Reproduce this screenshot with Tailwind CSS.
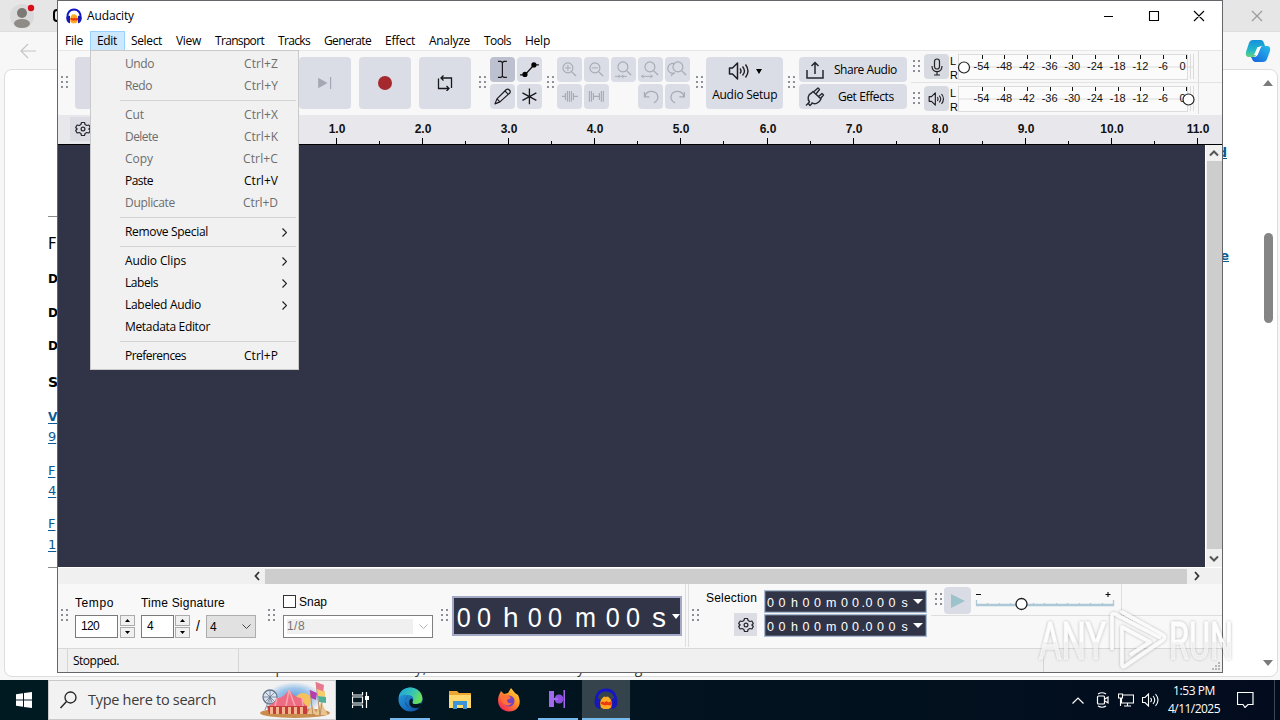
<!DOCTYPE html>
<html lang="en">
<head>
<meta charset="utf-8">
<title>Audacity</title>
<script src="https://cdn.jsdelivr.net/npm/@tailwindcss/browser@4"></script>
</head>
<body class="relative h-[720px] w-[1280px] overflow-hidden bg-[#f7f7f7] font-['Open_Sans','Noto_Sans',sans-serif] text-[12px] text-black">

<svg class="hidden">
  <defs>
    <symbol id="grip" viewBox="0 0 8 13"><g fill="#8d8d98"><rect x="0" y="0" width="2" height="2"/><rect x="5" y="0" width="2" height="2"/><rect x="0" y="5" width="2" height="2"/><rect x="5" y="5" width="2" height="2"/><rect x="0" y="10" width="2" height="2"/><rect x="5" y="10" width="2" height="2"/></g></symbol>
    <symbol id="gear" viewBox="0 0 16 16"><path d="M6.500 1.500h3l.6 2 1.700 1 2.100-.5 1.400 2.500L13.900 8l1.400 1.500-1.400 2.500-2.100-.5-1.700 1-.6 2h-3l-.6-2-1.700-1-2.100.5L.7 9.500 2.100 8 .7 6.500 2.100 4l2.100.5 1.700-1z" fill="none" stroke="#26262c" stroke-width="1.200" stroke-linejoin="round"/><circle cx="8" cy="8" r="1.900" fill="none" stroke="#26262c" stroke-width="1.200"/></symbol>
    <symbol id="phones" viewBox="0 0 24 22"><path d="M2.500 15C1 7 5.500 2 12 2s11 5 9.500 13" fill="none" stroke="#1414c8" stroke-width="2.800"/><path d="M1.500 11C-.5 14 .5 19 4 20.500l2 .5V10.500zM22.500 11c2 3 1 8-2.500 9.500l-2 .5V10.500z" fill="#1818b8"/><path d="M6 15l1.500-4L10 8.500l2 .5 2-.5 2.500 2.500L18 15l-1 4.500-2.500 1.500h-5L7 19.500z" fill="#ffab22"/><path d="M6 15l2.500-1.500 2 1 2-1.500 2 1.500 2-1L18.500 15l-2 2.500-3-.5-2.500.5-3-1z" fill="#ee3a10"/></symbol>
    <symbol id="speaker" viewBox="0 0 22 20"><path d="M1.500 7v6h3l5 5V2l-5 5z" fill="none" stroke="#1e1e24" stroke-width="1.500" stroke-linejoin="round"/><path d="M12 7.500q2 2.500 0 5M14.500 5.500q4 4.500 0 9M17.500 3.500q5 6.500 0 13" fill="none" stroke="#1e1e24" stroke-width="1.400"/></symbol>
    <symbol id="lens" viewBox="0 0 25 25"><circle cx="11" cy="11" r="5" fill="none" stroke="#a8aab5" stroke-width="1.200"/><path d="M14.700 14.700l4.500 4.500" stroke="#a8aab5" stroke-width="1.300"/></symbol>
  </defs>
</svg>

<!-- Browser window behind -->
<div class="absolute inset-x-0 top-0 flex h-[680px] flex-col bg-[#f7f7f7]">
  <div class="flex h-8 items-center justify-between border-b border-[#dedede] bg-[#e6e6e6] pl-2.5 pr-[17px]">
    <svg class="h-7 w-12" viewBox="0 0 48 28"><circle cx="12" cy="14" r="12" fill="#dadada"/><circle cx="12" cy="11" r="5" fill="#7d7975"/><ellipse cx="12" cy="21.500" rx="8" ry="4.500" fill="#8f8b87"/><circle cx="21" cy="6" r="3.200" fill="#d90d1c"/></svg>
    <svg class="size-3" viewBox="0 0 12 12"><path d="M1 1l10 10M11 1L1 11" stroke="#9a9a9a" stroke-width="1.200"/></svg>
  </div>
  <div class="flex h-[37px] items-center justify-between pl-5 pr-[9px]">
    <svg class="h-4 w-4" viewBox="0 0 16 16"><path d="M8 1L1 8l7 7M1 8h15" fill="none" stroke="#c4c4c4" stroke-width="1.200"/></svg>
    <svg class="size-[26px]" viewBox="0 0 26 26"><defs><linearGradient id="cpa" x1="0" y1="0" x2="0" y2="1"><stop offset="0" stop-color="#1590dd"/><stop offset=".6" stop-color="#22b8c8"/><stop offset="1" stop-color="#67d07c"/></linearGradient><linearGradient id="cpb" x1="1" y1="0" x2="0" y2="1"><stop offset="0" stop-color="#27bdec"/><stop offset="1" stop-color="#1660dc"/></linearGradient></defs><path d="M8 2h8q2 0 3 3l1 3h-4q-2 0-3 3l-2 6q-1 2-3 2H4q-4 0-3-5l3-9q1-3 4-3z" fill="url(#cpa)"/><path d="M18 24h-8q-2 0-3-3l-1-2h4q2 0 3-3l2-6q1-2 3-2h4q4 0 3 5l-3 8q-1 3-4 3z" fill="url(#cpb)"/><path d="M12.500 9h3.500l-3.500 8H9z" fill="#fff"/></svg>
  </div>
  <div class="ml-1 mr-0.5 flex h-[608px] justify-between rounded-lg border border-[#dddddd] bg-white">
    <div class="flex h-[606px] w-[70px] flex-col pl-[43px] font-['DejaVu_Sans','Verdana',sans-serif] text-[12px]">
      <div class="mt-[146px] h-px w-5 shrink-0 bg-[#8a8a8a]"></div>
      <div class="mt-[15px] h-6 text-[15px] leading-6">F</div>
      <div class="mt-[13px] h-5 font-bold leading-5">D</div>
      <div class="mt-3.5 h-5 font-bold leading-5">D</div>
      <div class="mt-[13px] h-5 font-bold leading-5">D</div>
      <div class="mt-3.5 h-6 text-[14px] font-bold leading-6">S</div>
      <div class="mt-[13px] h-5 w-4 border-[#0b5a94] font-bold leading-5 text-[#0b5a94] underline underline-offset-2">V</div>
      <div class="h-5 text-[13px] leading-5 text-[#0b5a94] underline underline-offset-2">9</div>
      <div class="mt-3.5 h-5 text-[13px] leading-5 text-[#0b5a94] underline underline-offset-2">F</div>
      <div class="h-5 text-[13px] leading-5 text-[#0b5a94] underline underline-offset-2">4</div>
      <div class="mt-[13px] h-5 text-[13px] leading-5 text-[#0b5a94] underline underline-offset-2">F</div>
      <div class="mt-px h-5 text-[13px] leading-5 text-[#0b5a94] underline underline-offset-2">1</div>
      <div class="mt-3 h-px w-5 shrink-0 bg-[#8a8a8a]"></div>
    </div>
    <div class="flex w-[60px] justify-between">
      <div class="flex w-4 flex-col items-end pr-1.5 pt-[73px] font-['DejaVu_Sans',sans-serif] text-[13px] font-bold leading-5 text-[#0b5a94]">
        <span class="underline">d</span><span class="mt-[83px] -mr-0.5 underline">e</span>
      </div>
      <div class="mr-[3px] flex w-3 flex-col items-center pt-2">
        <svg class="h-2.5 w-2.5" viewBox="0 0 10 10"><path d="M0 8l5-6 5 6z" fill="#7b7b7b"/></svg>
        <div class="mt-[145px] h-[90px] w-[9px] rounded-full bg-[#858585]"></div>
        <svg class="mt-[335px] h-2.5 w-2.5" viewBox="0 0 10 10"><path d="M0 2l5 6 5-6z" fill="#7b7b7b"/></svg>
      </div>
    </div>
  </div>
</div>
<div class="absolute left-[220px] top-[662px] h-[15px] w-[470px] text-[14px] leading-[12px] text-[#333]"><span data-w="454">driver updater automatically, hitbad and install any missing and</span></div>
<div class="absolute left-[53px] top-[9px] h-[13px] w-3 rounded-sm border-2 border-black"></div>

<!-- Audacity window -->
<div class="absolute left-[57px] top-0 flex h-[673px] w-[1166px] flex-col border border-[#66666a] bg-white">
  <div class="flex h-[30px] items-center pl-2 pr-4">
    <svg class="h-4 w-4" viewBox="0 0 24 22" preserveAspectRatio="none"><use href="#phones" width="24" height="22"/></svg>
    <span class="ml-[5px]" data-w="47">Audacity</span>
    <svg class="ml-auto h-3 w-[102px]" viewBox="0 0 102 12"><path d="M-1 6.500h10M45.500 1.500h9v9h-9zM90 1l10 10M100 1L90 11" fill="none" stroke="#000" stroke-width="1.100"/></svg>
  </div>
  <div class="flex h-[19px] leading-[19px]">
    <div class="w-8 pl-[7px]"><span data-w="18">File</span></div>
    <div class="-mr-px w-[35px] border border-b-0 border-[#99d1ff] bg-[#cce8ff] pl-1.5 leading-[17px]"><span data-w="20">Edit</span></div>
    <div class="w-[45px] pl-[7px]"><span data-w="31">Select</span></div>
    <div class="w-[39px] pl-[7px]"><span data-w="25">View</span></div>
    <div class="w-[63px] pl-[7px]"><span data-w="49">Transport</span></div>
    <div class="w-[46px] pl-[7px]"><span data-w="32">Tracks</span></div>
    <div class="w-[61px] pl-[7px]"><span data-w="47">Generate</span></div>
    <div class="w-11 pl-[7px]"><span data-w="30">Effect</span></div>
    <div class="w-[55px] pl-[7px]"><span data-w="41">Analyze</span></div>
    <div class="w-[41px] pl-[7px]"><span data-w="27">Tools</span></div>
    <div class="w-10 pl-[7px]"><span data-w="25">Help</span></div>
  </div>

  <!-- Upper toolbars -->
  <div class="flex h-[65px] border-t border-[#e6e6e6] bg-[#f8f8f8] pl-[3px] pt-1.5">
    <svg class="mt-[19px] h-[13px] w-2"><use href="#grip"/></svg>
    <div class="ml-1.5 flex gap-2">
      <div class="h-[52px] w-[216px] rounded-sm bg-[#dadbe4]"></div>
      <div class="grid h-[52px] w-[52px] place-items-center rounded-sm bg-[#dbdde6]"><svg class="h-3 w-4" viewBox="0 0 16 14"><path d="M0 1l11 6L0 13z" fill="#a5a8b3"/><path d="M14.500 0v14" stroke="#a5a8b3" stroke-width="1.400"/></svg></div>
      <div class="grid h-[52px] w-[52px] place-items-center rounded-sm bg-[#dbdde6]"><div class="size-3.5 rounded-full bg-[#a5292d]"></div></div>
      <div class="grid h-[52px] w-[52px] place-items-center rounded-sm bg-[#dbdde6]"><svg class="size-4" viewBox="0 0 16 16"><path d="M4 3h10.500v10M12 13.500H1.500V3.500M6.500.5L4 3l2.500 2.500M9.500 11l2.500 2.500L9.500 16" fill="none" stroke="#17171c" stroke-width="1.300"/></svg></div>
    </div>
    <svg class="ml-2 mt-[19px] h-[13px] w-2"><use href="#grip"/></svg>
    <div class="ml-[3px] grid h-[52px] w-[52px] grid-cols-2 gap-0.5">
      <div class="rounded-sm bg-[#bdc0ce]"><svg viewBox="0 0 25 25"><path d="M8 4.500h3l1.500 1 1.500-1h3M12.500 5.500v14M8 20.500h3l1.500-1 1.500 1h3" fill="none" stroke="#18181d" stroke-width="1.200"/></svg></div>
      <div class="rounded-sm bg-[#dbdde6]"><svg viewBox="0 0 25 25"><path d="M3 18h5l9-10h5" fill="none" stroke="#111" stroke-width="1.300"/><circle cx="8" cy="17.500" r="2.600"/><circle cx="17" cy="8" r="2.600"/></svg></div>
      <div class="rounded-sm bg-[#dbdde6]"><svg viewBox="0 0 25 25"><path d="M5 20l2-5L16.500 5.500q1.500-1 3 .5t.5 3L10 18zM7 15l3 3M15 7l3 3" fill="none" stroke="#18181d" stroke-width="1.200" stroke-linejoin="round"/></svg></div>
      <div class="rounded-sm bg-[#dbdde6]"><svg viewBox="0 0 25 25"><path d="M12.500 4.500v16M5.500 9l14 7.500M19.500 9l-14 7.500" fill="none" stroke="#18181d" stroke-width="1.300"/></svg></div>
    </div>
    <svg class="ml-[5px] mt-[19px] h-[13px] w-2"><use href="#grip"/></svg>
    <div class="ml-[3px] grid h-[52px] w-[133px] grid-cols-5 gap-0.5">
      <div class="rounded-sm bg-[#dbdde6]"><svg viewBox="0 0 25 25"><use href="#lens"/><path d="M8 11h6M11 8v6" stroke="#a8aab5"/></svg></div>
      <div class="rounded-sm bg-[#dbdde6]"><svg viewBox="0 0 25 25"><use href="#lens"/><path d="M8 11h6" stroke="#a8aab5"/></svg></div>
      <div class="rounded-sm bg-[#dbdde6]"><svg viewBox="0 0 25 25"><use href="#lens" x="1" y="-1"/><path d="M4 19.500h5M7.500 18l2 1.500-2 1.500M11 19.500h5M12.500 18l-2 1.500 2 1.500" fill="none" stroke="#a8aab5"/></svg></div>
      <div class="rounded-sm bg-[#dbdde6]"><svg viewBox="0 0 25 25"><use href="#lens" x="1" y="-1"/><path d="M3.500 19.500h11M5.500 18l-2 1.500 2 1.500M12.500 18l2 1.500-2 1.500" fill="none" stroke="#a8aab5"/></svg></div>
      <div class="rounded-sm bg-[#dbdde6]"><svg viewBox="0 0 25 25"><use href="#lens" x="2" y="-1"/><path d="M10 16a5 5 0 1 1 0-9M9 16l-3 3" fill="none" stroke="#a8aab5" stroke-width="1.200"/></svg></div>
      <div class="rounded-sm bg-[#dbdde6]"><svg viewBox="0 0 25 25"><path d="M5 12.500h3M17 12.500h4M8.500 9v7M10.500 7v11M12.500 7v11M14.500 7v11M16.500 9v7" stroke="#a8aab5" stroke-width="1.200"/></svg></div>
      <div class="rounded-sm bg-[#dbdde6]"><svg viewBox="0 0 25 25"><path d="M9 12.500h7M5.500 7v11M7.500 7v11M9.500 9v7M15.500 9v7M17.500 7v11M19.500 7v11" stroke="#a8aab5" stroke-width="1.200"/></svg></div>
      <div></div>
      <div class="rounded-sm bg-[#dbdde6]"><svg viewBox="0 0 25 25"><path d="M7 12.500C9 5.500 19 6 20 13q.2 4-4 6M6.500 8v5h5" fill="none" stroke="#a8aab5" stroke-width="1.300"/></svg></div>
      <div class="rounded-sm bg-[#dbdde6]"><svg viewBox="0 0 25 25"><path d="M19 12.500C17 5.500 7 6 6 13q-.2 4 4 6M19.500 8v5h-5" fill="none" stroke="#a8aab5" stroke-width="1.300"/></svg></div>
    </div>
    <svg class="ml-1.5 mt-[19px] h-[13px] w-2"><use href="#grip"/></svg>
    <div class="ml-[3px] flex h-[52px] w-[77px] flex-col items-center rounded-sm bg-[#dbdde6] pt-1">
      <div class="flex items-center gap-1.5"><svg class="h-5 w-[22px]"><use href="#speaker"/></svg><svg class="h-[5px] w-1.5" viewBox="0 0 6 5"><path d="M0 0h6L3 5z"/></svg></div>
      <span class="mt-[5px] leading-[18px]" data-w="65">Audio Setup</span>
    </div>
    <svg class="ml-[5px] mt-[19px] h-[13px] w-2"><use href="#grip"/></svg>
    <div class="ml-[3px] flex w-[109px] flex-col gap-0.5">
      <div class="flex h-[25px] items-center rounded-sm bg-[#dbdde6] pl-[7px]">
        <svg class="h-[18px] w-[18px]" viewBox="0 0 18 18"><path d="M1 9v8h16V9M9 13V1.500M5.500 5L9 1.500 12.500 5" fill="none" stroke="#26262e" stroke-width="1.500"/></svg>
        <span class="ml-[10px]" data-w="63">Share Audio</span>
      </div>
      <div class="flex h-[25px] items-center rounded-sm bg-[#dbdde6] pl-1.5">
        <svg class="h-5 w-5" viewBox="0 0 20 20"><path d="M1 18.500l3.500-3.500C2 12 3 7.500 6.500 6L8 4.500l8 7.500c-2 4.500-6.500 6-9.500 3.500M3 16l2 2.500 2-2M8.500 5L13 1l1.500 1.500L11 7M13 10l4-3.500L18.500 8 15.500 11.500" fill="none" stroke="#26262e" stroke-width="1.400" stroke-linejoin="round"/></svg>
        <span class="ml-[13px]" data-w="56">Get Effects</span>
      </div>
    </div>
    <div class="-mt-1.5 ml-1 flex w-[313px] flex-col text-[11px]">
      <div class="flex h-8 border-b border-[#e2e2e2]">
        <svg class="ml-0.5 mt-[9px] h-[13px] w-2"><use href="#grip"/></svg>
        <div class="ml-[3px] mt-[3px] grid h-[25px] w-[25px] place-items-center rounded-sm bg-[#d8dae2]"><svg class="h-[18px] w-3" viewBox="0 0 12 18"><rect x="3.500" y="1" width="5" height="10" rx="2.500" fill="none" stroke="#222" stroke-width="1.200"/><path d="M1 8c0 7.500 10 7.500 10 0M6 14v3M3 17h6" fill="none" stroke="#222" stroke-width="1.200"/></svg></div>
        <svg class="h-[31px] w-[250px] font-['Liberation_Sans',sans-serif]" viewBox="950 0 250 31"><g id="meter1"></g><circle cx="965" cy="16.500" r="5.500" fill="#fff" stroke="#222" stroke-width="1.200"/></svg>
      </div>
      <div class="flex h-8">
        <svg class="ml-0.5 mt-[9px] h-[13px] w-2"><use href="#grip"/></svg>
        <div class="ml-[3px] mt-[3px] grid h-[25px] w-[25px] place-items-center rounded-sm bg-[#d8dae2]"><svg class="h-4 w-[17px]" viewBox="0 0 22 20"><use href="#speaker" width="22" height="20"/></svg></div>
        <svg class="h-[31px] w-[250px] font-['Liberation_Sans',sans-serif]" viewBox="950 0 250 31"><g id="meter2"></g><circle cx="1189.500" cy="16.500" r="5.500" fill="#fff" stroke="#222" stroke-width="1.200"/></svg>
      </div>
    </div>
  </div>

  <!-- Timeline -->
  <div class="flex h-[30px] border-b border-black bg-[#e8e8ec] pl-3">
    <div class="mt-0.5 h-6 w-5 bg-[#dbdce4] pl-[5px] pt-1"><svg class="size-4"><use href="#gear"/></svg></div>
    <svg class="h-[29px] w-[1132px] font-['Liberation_Sans',sans-serif]" viewBox="90 0 1132 29"><g id="ruler"></g></svg>
  </div>

  <!-- Track area -->
  <div class="flex h-[422px]">
    <div class="w-[1147px] bg-[#313447]"></div>
    <div class="flex w-[17px] flex-col items-center border-l border-white bg-[#f0f0f0]">
      <svg class="h-4 w-4" viewBox="0 0 16 16"><path d="M4 10.500l4-4 4 4" fill="none" stroke="#555" stroke-width="2"/></svg>
      <div class="h-[388px] w-[15px] bg-[#cdcdcd]"></div>
      <svg class="mt-[2px] h-4 w-4" viewBox="0 0 16 16"><path d="M4 5.500l4 4 4-4" fill="none" stroke="#555" stroke-width="2"/></svg>
    </div>
  </div>
  <div class="flex h-[17px] items-center border-t border-white bg-[#f0f0f0] pl-[191px]">
    <svg class="h-4 w-4" viewBox="0 0 16 16"><path d="M10 4L6.500 8l3.500 4" fill="none" stroke="#333" stroke-width="1.800"/></svg>
    <div class="h-[15px] w-[922px] bg-[#cdcdcd]"></div>
    <svg class="ml-0.5 h-4 w-4" viewBox="0 0 16 16"><path d="M6 4l3.500 4L6 12" fill="none" stroke="#333" stroke-width="1.800"/></svg>
  </div>

  <!-- Lower toolbars -->
  <div class="flex h-[65px] border-b border-[#d8d8d8] bg-[#f8f8f8] pl-[3px] font-['Liberation_Sans',sans-serif]">
    <svg class="mt-[25px] h-[13px] w-2"><use href="#grip"/></svg>
    <div class="ml-1.5 w-[66px] pt-[11px]">
      <div class="h-5 leading-4"><span data-w="39">Tempo</span></div>
      <div class="flex h-[23px] gap-0.5">
        <div class="w-[43px] border border-[#7a7a7a] bg-white pl-[5px] leading-[21px]"><span data-w="18">120</span></div>
        <div class="flex w-[15px] flex-col gap-px">
          <div class="grid h-[11px] place-items-center border border-[#ababab] bg-[#f0f0f0]"><svg class="h-[3px] w-[5px]" viewBox="0 0 5 3"><path d="M0 3L2.500 0 5 3z"/></svg></div>
          <div class="grid h-[11px] place-items-center border border-[#ababab] bg-[#f0f0f0]"><svg class="h-[3px] w-[5px]" viewBox="0 0 5 3"><path d="M0 0l2.500 3L5 0z"/></svg></div>
        </div>
      </div>
    </div>
    <div class="w-[115px] pt-[11px]">
      <div class="h-5 leading-4"><span data-w="84">Time Signature</span></div>
      <div class="flex h-[23px]">
        <div class="w-[33px] border border-[#7a7a7a] bg-white pl-[5px] leading-[21px]">4</div>
        <div class="ml-px flex w-[15px] flex-col gap-px">
          <div class="grid h-[11px] place-items-center border border-[#ababab] bg-[#f0f0f0]"><svg class="h-[3px] w-[5px]" viewBox="0 0 5 3"><path d="M0 3L2.500 0 5 3z"/></svg></div>
          <div class="grid h-[11px] place-items-center border border-[#ababab] bg-[#f0f0f0]"><svg class="h-[3px] w-[5px]" viewBox="0 0 5 3"><path d="M0 0l2.500 3L5 0z"/></svg></div>
        </div>
        <div class="w-4 text-center text-[14px] leading-[22px]">/</div>
        <div class="flex w-[50px] items-center justify-between border border-[#adadad] bg-[#e1e1e1] pl-[3px] pr-1">4<svg class="h-[5px] w-[9px]" viewBox="0 0 9 5"><path d="M.5.5l4 4 4-4" fill="none" stroke="#444"/></svg></div>
      </div>
    </div>
    <svg class="ml-3 mt-[25px] h-[13px] w-2"><use href="#grip"/></svg>
    <div class="ml-[7px] w-[150px] pt-[11px]">
      <div class="flex h-5 gap-[3px] leading-[14px]"><div class="size-[13px] border border-[#333] bg-white"></div><span data-w="28">Snap</span></div>
      <div class="flex h-[23px] items-center justify-between border border-[#7f7f7f] bg-white pl-[3px] pr-1"><div class="h-[15px] w-[126px] bg-[#f0f0f0] leading-[15px] text-[#747474]"><span data-w="18">1/8</span></div><svg class="h-[5px] w-[9px]" viewBox="0 0 9 5"><path d="M.5.5l4 4 4-4" fill="none" stroke="#b4b4b4"/></svg></div>
    </div>
    <svg class="ml-2 mt-[25px] h-[13px] w-2"><use href="#grip"/></svg>
    <svg class="ml-[3px] mt-3 h-10 w-[230px]" viewBox="452 596 230 40"><rect x="453" y="597" width="228" height="38" fill="#313447" stroke="#a4a9c6" stroke-width="2"/><g fill="#fff" font-size="28"><g transform="scale(.9 1)"><text x="507.500 530" y="627">00</text><text x="586.500 609" y="627">00</text><text x="673 695.500" y="627">00</text></g><text x="503" y="627">h</text><text x="575" y="627" textLength="21" lengthAdjust="spacingAndGlyphs">m</text><text x="652" y="627">s</text></g><path d="M672 614h8l-4 5z" fill="#fff"/></svg>
    <div class="ml-[3px] h-[63px] w-1 border-x border-[#dedede]"></div>
    <svg class="ml-[3px] mt-[25px] h-[13px] w-2"><use href="#grip"/></svg>
    <div class="ml-1.5 flex w-[58px] flex-col pt-1.5">
      <span class="leading-4" data-w="51">Selection</span>
      <div class="ml-7 mt-[7px] grid size-[23px] place-items-center bg-[#dbdce4]"><svg class="h-4 w-4"><use href="#gear"/></svg></div>
    </div>
    <div class="flex w-[163px] flex-col gap-px pt-1.5">
      <svg class="h-[23px] w-[163px]" viewBox="764 590 163 23"><g id="time1"></g></svg>
      <svg class="h-[23px] w-[163px]" viewBox="764 590 163 23"><g id="time2"></g></svg>
    </div>
    <div class="ml-1 flex w-[190px] flex-col">
      <div class="flex h-8 border-b border-[#dedede]">
        <svg class="ml-1 mt-[9px] h-[13px] w-2"><use href="#grip"/></svg>
        <div class="ml-px mt-[3px] grid size-[27px] place-items-center rounded-sm bg-[#d9dce4]"><svg class="h-[14px] w-[14px]" viewBox="0 0 14 14"><path d="M0 0l14 7-14 7z" fill="#9cc3cb"/></svg></div>
        <svg class="h-8 w-[150px]" viewBox="971 584 150 32"><path d="M976.500 600v5.500h137V600M976 604.500h138M987.500 603v2M999.500 603v2M1010.500 603v2M1033.500 603v2M1044.500 603v2M1056.500 603v2M1067.500 603v2M1079.500 603v2M1090.500 603v2M1102.500 603v2" fill="none" stroke="#adc9d7" stroke-width="1.300"/><circle cx="1021.500" cy="604" r="5.500" fill="#fff" stroke="#1c1c1c" stroke-width="1.300"/><path d="M976 594.500h5M1105.500 594.500h5M1108 592v5" stroke="#111" stroke-width="1.100"/></svg>
      </div>
    </div>
    <div class="flex grow flex-col"><div class="h-8 border-b border-l border-[#dedede]"></div></div>
  </div>
  <div class="flex h-[22px] grow bg-[#f0f0f0] pl-[9px] leading-[24px]">
    <div class="w-[171px] border-l border-[#d5d5d5] pl-[5px]"><span data-w="46">Stopped.</span></div>
    <div class="w-[805px] border-l border-[#d5d5d5]"></div>
    <div class="flex grow items-end justify-end border-l border-[#d5d5d5] p-0.5"><svg class="size-2" viewBox="0 0 8 8"><path d="M6 0h2v2H6zM6 3h2v2H6zM3 3h2v2H3zM0 6h2v2H0zM3 6h2v2H3zM6 6h2v2H6z" fill="#b7b7b7"/></svg></div>
  </div>
</div>

<!-- Edit menu -->
<div class="absolute left-[90px] top-[50px] flex h-[320px] w-[209px] flex-col border border-[#c9c9c9] bg-[#f1f1f1] pl-[34px] pt-[2px] leading-[22px]">
  <div class="flex h-[22px] justify-between pr-5 text-[#6d6d6d]"><span data-w="29">Undo</span><span data-w="34">Ctrl+Z</span></div>
  <div class="flex h-[22px] justify-between pr-5 text-[#6d6d6d]"><span data-w="27">Redo</span><span data-w="34">Ctrl+Y</span></div>
  <div class="-ml-[5px] mb-[3px] mr-0.5 mt-[3px] h-px bg-[#d4d4d4]"></div>
  <div class="flex h-[22px] justify-between pr-5 text-[#6d6d6d]"><span data-w="19">Cut</span><span data-w="34">Ctrl+X</span></div>
  <div class="flex h-[22px] justify-between pr-5 text-[#6d6d6d]"><span data-w="33">Delete</span><span data-w="34">Ctrl+K</span></div>
  <div class="flex h-[22px] justify-between pr-5 text-[#6d6d6d]"><span data-w="28">Copy</span><span data-w="35">Ctrl+C</span></div>
  <div class="flex h-[22px] justify-between pr-5"><span data-w="28">Paste</span><span data-w="34">Ctrl+V</span></div>
  <div class="flex h-[22px] justify-between pr-5 text-[#6d6d6d]"><span data-w="50">Duplicate</span><span data-w="35">Ctrl+D</span></div>
  <div class="-ml-[5px] mb-[3px] mr-0.5 mt-[3px] h-px bg-[#d4d4d4]"></div>
  <div class="flex h-[22px] items-center justify-between pr-[11px]"><span data-w="83">Remove Special</span><svg class="h-[9px] w-[5px]" viewBox="0 0 5 9"><path d="M.5.5l4 4-4 4" fill="none" stroke="#222" stroke-width="1.200"/></svg></div>
  <div class="-ml-[5px] mb-[3px] mr-0.5 mt-[3px] h-px bg-[#d4d4d4]"></div>
  <div class="flex h-[22px] items-center justify-between pr-[11px]"><span data-w="61">Audio Clips</span><svg class="h-[9px] w-[5px]" viewBox="0 0 5 9"><path d="M.5.5l4 4-4 4" fill="none" stroke="#222" stroke-width="1.200"/></svg></div>
  <div class="flex h-[22px] items-center justify-between pr-[11px]"><span data-w="33">Labels</span><svg class="h-[9px] w-[5px]" viewBox="0 0 5 9"><path d="M.5.5l4 4-4 4" fill="none" stroke="#222" stroke-width="1.200"/></svg></div>
  <div class="flex h-[22px] items-center justify-between pr-[11px]"><span data-w="76">Labeled Audio</span><svg class="h-[9px] w-[5px]" viewBox="0 0 5 9"><path d="M.5.5l4 4-4 4" fill="none" stroke="#222" stroke-width="1.200"/></svg></div>
  <div class="flex h-[22px]"><span data-w="85">Metadata Editor</span></div>
  <div class="-ml-[5px] mb-[3px] mr-0.5 mt-[3px] h-px bg-[#d4d4d4]"></div>
  <div class="flex h-[22px] justify-between pr-5"><span data-w="61">Preferences</span><span data-w="34">Ctrl+P</span></div>
</div>

<!-- Watermark -->
<svg class="absolute left-[1030px] top-[600px] h-20 w-[215px]" viewBox="1030 600 215 80">
  <defs><linearGradient id="wm" x1="0" y1="0" x2="0" y2="1"><stop offset=".5" stop-color="#fff" stop-opacity=".95"/><stop offset=".52" stop-color="#f6f6f6" stop-opacity=".7"/></linearGradient><filter id="sh" x="-10%" y="-10%" width="120%" height="130%"><feDropShadow dx="0" dy="0" stdDeviation="1.500" flood-color="#000" flood-opacity=".35"/></filter></defs>
  <g filter="url(#sh)" font-family="Roboto,sans-serif" font-size="51" fill="url(#wm)" stroke="#fff" stroke-opacity=".5">
    <text x="1039" y="659" textLength="67" lengthAdjust="spacingAndGlyphs">ANY</text>
    <text x="1169" y="659" textLength="64" lengthAdjust="spacingAndGlyphs">RUN</text>
    <path d="M1112 650v-34q0-3 3-2l46 24M1122 613v-1l41 23q3 2 0 5l-38 26q-3 2-3-2v-37l28 15-20 13" fill="none" stroke="#fff" stroke-opacity=".85" stroke-width="3.500" stroke-linejoin="round"/>
  </g>
</svg>

<!-- Taskbar -->
<div class="absolute inset-x-0 top-[680px] flex h-10 items-center bg-linear-to-r from-[#001a22] via-[#02141f] to-[#020c1e]">
  <div class="grid h-10 w-12 place-items-center"><svg class="size-4" viewBox="0 0 16 16"><path d="M0 2.200L7 1.200V7.500H0zM8 1l8-1v7.500H8zM0 8.500h7v6.300l-7-1zM8 8.500h8V16l-8-1z" fill="#fff"/></svg></div>
  <div class="flex h-10 w-72 items-center border border-[#c9c9c9] bg-[#f2f2f2] pl-[11px]">
    <svg class="h-[18px] w-[17px]" viewBox="0 0 17 18"><circle cx="10.500" cy="6.500" r="5.500" fill="none" stroke="#222" stroke-width="1.300"/><path d="M6.500 10.500L.5 17" stroke="#222" stroke-width="1.400"/></svg>
    <span class="ml-[11px] text-[14.5px] text-[#3c3c3c]" data-w="128">Type here to search</span>
    <svg class="ml-auto mr-1 h-[38px] w-[72px]" viewBox="0 0 72 38"><defs><radialGradient id="sky"><stop offset="0" stop-color="#5b9be0"/><stop offset=".6" stop-color="#9cc4ea"/><stop offset="1" stop-color="#f2f2f2"/></radialGradient></defs><ellipse cx="35" cy="17" rx="28" ry="16" fill="url(#sky)"/><ellipse cx="36" cy="32" rx="35" ry="5" fill="#c98d4e"/><circle cx="11" cy="16" r="7" fill="#dce5ef" stroke="#68798f" stroke-width="1.300"/><path d="M4 16h14M11 9v14M6 11l10 10M16 11L6 21M11 16L6 29M11 16l5 13" stroke="#68798f" stroke-width=".8"/><circle cx="44" cy="20" r="8" fill="#f4c15c"/><path d="M9 25q6-2 9-8 5 1 12-8 7 9 13 8 1 6 5 8l-2 8H10z" fill="#ee6c83"/><path d="M18 17l-2 8M30 9l-3 16M30 9l6 16M43 17l1 8" stroke="#f9a5ac" stroke-width="1.500"/><path d="M8 25h40v8H10z" fill="#c53c3e"/><path d="M11 26h3v7h-3zM17 26h3v7h-3zM23 26h3v7h-3zM29 26h3v7h-3zM35 26h3v7h-3zM41 26h3v7h-3z" fill="#f6b48c"/><path d="M48 33l5-9 5 9zM56 34l6-13 7 13z" fill="#e8c58c"/><path d="M57 1l4 34M51 9l3 26M65 10l-4 24" stroke="#b98a69"/><path d="M57 1l8 3-1 9-6-2z" fill="#ea7790"/><path d="M58 8l8 3 0 5-7-1z" fill="#f4cd6d"/><path d="M51 9l7 3-1 7-5-2z" fill="#b63db0"/><path d="M59 15l8 1v6l-7-1z" fill="#4faf97"/></svg>
  </div>
  <div class="grid h-10 w-[49px] place-items-center"><svg class="h-4 w-[17px]" viewBox="0 0 17 16"><path d="M.5 0v3h10V0M.5 16v-3h10v3M.5 5h10v6H.5zM14.500 0v16" fill="none" stroke="#fff" stroke-width="1.200"/><path d="M13 4h4v4h-4z" fill="#fff"/></svg></div>
  <div class="grid h-10 w-[50px] place-items-center"><div class="flex h-10 w-10 flex-col items-center justify-end gap-[5px] border-b-2 border-[#76b9ed]">
    <svg class="mb-1.5 size-[25px]" viewBox="0 0 25 25"><defs><linearGradient id="eg" x1="0" y1="0" x2="1" y2=".4"><stop offset="0" stop-color="#1c9ddd"/><stop offset=".6" stop-color="#36c5b6"/><stop offset="1" stop-color="#69df5c"/></linearGradient><linearGradient id="eb" x1="0" y1="0" x2="1" y2="1"><stop offset="0" stop-color="#29a6e6"/><stop offset="1" stop-color="#0d489e"/></linearGradient></defs><circle cx="12.500" cy="12.500" r="12" fill="url(#eb)"/><path d="M.7 11C2-4 24-2 24.500 12q-.5 5-7 5-4 0-3-2 3-6-4-7Q3 7 .7 11z" fill="url(#eg)"/><path d="M10 9q-5 3-1 9 4 6 13 2-7 4-13-1-4-5 1-10z" fill="#123f83"/><path d="M14.500 15q-1 3 7 1.500l3 0-3 4q-8 2-10-3-1-5 2-6 2 1 1 3.500z" fill="#03171f"/></svg></div></div>
  <div class="grid h-10 w-[49px] place-items-center"><svg class="h-5 w-[22px]" viewBox="0 0 22 20"><path d="M0 1h8l2 2h12v15H0z" fill="#eca832"/><path d="M0 5h22v13H0z" fill="#ffd86e"/><path d="M4 11h14v8h-4v-4H8v4H4z" fill="#3b94d6"/></svg></div>
  <div class="grid h-10 w-[49px] place-items-center"><svg class="size-6" viewBox="0 0 24 24"><defs><linearGradient id="ff" x1="1" y1="0" x2=".2" y2="1"><stop offset="0" stop-color="#ffe64a"/><stop offset=".45" stop-color="#ff9623"/><stop offset="1" stop-color="#f5215a"/></linearGradient></defs><path d="M3 5l1-2 3 3 4-1 3-5 4 5 3 2c4 8 1 16-9 16.500C3 23.500-2 14 3 5z" fill="url(#ff)"/><circle cx="12" cy="13" r="5.500" fill="#7542c4"/><path d="M4 8q4-2 8 0l2 2-4 2q0 4 5 3-4 5-9 0-3-3-2-7z" fill="#ff7139"/></svg></div>
  <div class="flex h-10 w-[49px] justify-center"><div class="grid w-10 place-items-center border-b-2 border-[#76b9ed]"><svg class="h-[18px] w-[17px]" viewBox="0 0 17 18"><path d="M0 1h5v16H0zM14.500 0H16v18h-1.500z" fill="#a268ee"/><circle cx="10" cy="9" r="4.500" fill="#8d4edf"/><path d="M5 8h4v2H5z" fill="#a268ee"/></svg></div></div>
  <div class="grid h-10 w-12 place-items-center border-b-2 border-[#76b9ed] bg-[#34434c]"><svg class="h-[22px] w-6"><use href="#phones"/></svg></div>
  <div class="ml-auto flex h-10 items-center pr-[5px] text-white">
    <svg class="h-[7px] w-3" viewBox="0 0 12 7"><path d="M.5 6.500L6 1l5.500 5.500" fill="none" stroke="#fff" stroke-width="1.200"/></svg>
    <svg class="ml-3 h-4 w-3.5" viewBox="0 0 14 16"><rect x="1.500" y="4" width="7" height="8" rx="1" fill="none" stroke="#fff" stroke-width="1.200"/><path d="M9 7l3-2v6L9 9M2 2q4-2.500 8 0M2 14q4 2.500 8 0" fill="none" stroke="#fff" stroke-width="1.200"/></svg>
    <svg class="ml-2 h-3.5 w-4" viewBox="0 0 16 14"><path d="M5 2h10.500v8H3.500V5M9.500 10v3M6 13h7M.5 1h4v4h-4zM2.500 5v8" fill="none" stroke="#fff" stroke-width="1.100"/></svg>
    <svg class="ml-2 h-3.5 w-[17px]" viewBox="0 0 17 14"><path d="M.5 4.500v5h2.500L6.500 13V1L3 4.500zM8.500 5q2 2 0 4M11 3q3.500 4 0 8M13.500 1q5 6 0 12" fill="none" stroke="#fff" stroke-width="1.100"/></svg>
    <div class="ml-[9px] flex w-[52px] flex-col items-center leading-[18px]"><span data-w="42">1:53 PM</span><span data-w="52">4/11/2025</span></div>
    <svg class="ml-[17px] h-4 w-[17px]" viewBox="0 0 17 16"><path d="M.5.500h15.500v12h-5L8 15.500 6 12.500H.5z" fill="none" stroke="#fff" stroke-width="1.200"/></svg>
    <div class="ml-5 h-10 w-px bg-[#3c4650]"></div>
  </div>
</div>

<script>
function fitLabels() {
  document.querySelectorAll('[data-w]').forEach(el => {
    el.style.whiteSpace = 'nowrap';
    el.style.display = 'inline-block';
    el.style.letterSpacing = '0px';
    const range = document.createRange();
    range.selectNodeContents(el);
    const natural = range.getBoundingClientRect().width;
    el.style.letterSpacing = (Number(el.dataset.w) - natural) / el.textContent.length + 'px';
  });
}
fitLabels();
window.addEventListener('load', () => { fitLabels(); requestAnimationFrame(fitLabels); });
document.fonts.ready.then(fitLabels);
new ResizeObserver(fitLabels).observe(document.body);
[20, 80, 200, 400].forEach(ms => setTimeout(fitLabels, ms));

// Timeline ticks, one label per second.
let ticks = '';
for (let i = 0; i <= 20; i++) {
  const x = Math.round(337 + i * 43.05) - 0.5, major = i % 2 === 0;
  ticks += `<path d="M${x} ${major ? 23 : 26}V29" stroke="#000"/>`;
  if (major) ticks += `<text x="${x + 0.5}" y="18" text-anchor="middle" font-size="12" font-weight="bold" fill="#111">${(i / 2 + 1).toFixed(1)}</text>`;
}
document.getElementById('ruler').innerHTML = ticks;
// Meter scales in dB.
for (const id of ['meter1', 'meter2']) {
  let s = '<rect x="959.5" y="3.5" width="229" height="25" fill="#fbfbfb" stroke="#dcdcdc"/><path d="M959 16H1194M1191.500 3v25M1194.500 3v25M1199.500 0v31" stroke="#dcdcdc" fill="none"/><text x="951" y="14" font-size="11">L</text><text x="951" y="28" font-size="11">R</text>';
  for (let k = 0; k < 10; k++) {
    const x = 982.5 + k * 22.7, db = -54 + k * 6;
    s += `<path d="M${Math.round(x) + 0.5} 4V8" stroke="#111"/><text x="${k === 9 ? 1183.5 : x}" y="19" text-anchor="middle" font-size="11" fill="#111">${db}</text>`;
  }
  document.getElementById(id).innerHTML = s;
}
// Selection start and end.
for (const id of ['time1', 'time2']) {
  document.getElementById(id).innerHTML = '<rect x="764.5" y="590.5" width="162" height="22" fill="#313447" stroke="#a9b9cf" stroke-width="1.6"/><g fill="#fff" font-size="12.5"><text x="767 778.5" y="607">00</text><text x="791" y="607">h</text><text x="802.5 814" y="607">00</text><text x="826" y="607">m</text><text x="841 852 861.5 865.500 877 888.5" y="607">00.000</text><text x="901.5" y="607">s</text></g><path d="M913 599h10l-5 5z" fill="#fff"/>';
}
</script>
</body>
</html>
